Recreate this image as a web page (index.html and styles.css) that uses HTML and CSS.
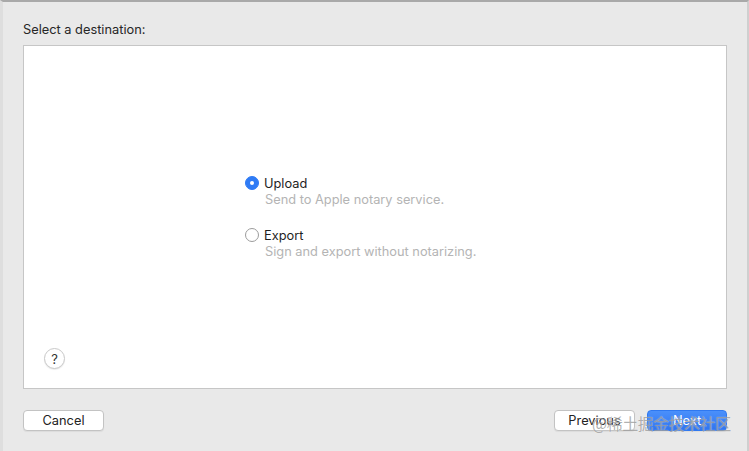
FILE: index.html
```html
<!DOCTYPE html>
<html lang="en">
<head>
  <meta charset="UTF-8" />
  <title>Select a destination</title>
  <link rel="stylesheet" href="styles.css">
</head>
<body>
  <div class="window">
    <p class="label">Select a destination:</p>

    <div class="panel">
      <div class="options">
        <label class="option">
          <span class="radio checked"></span>
          <span class="option-text">
            <span class="option-title">Upload</span>
            <span class="option-desc">Send to Apple notary service.</span>
          </span>
        </label>
        <label class="option">
          <span class="radio"></span>
          <span class="option-text">
            <span class="option-title">Export</span>
            <span class="option-desc">Sign and export without notarizing.</span>
          </span>
        </label>
      </div>
      <button class="help-btn">?</button>
    </div>

    <div class="actions">
      <button class="btn">Cancel</button>
      <div class="actions-right">
        <button class="btn">Previous</button>
        <button class="btn btn-primary">Next</button>
      </div>
    </div>
  </div>

  <div class="watermark">@稀土掘金技术社区</div>
</body>
</html>
```

FILE: styles.css
```css
body {
  margin: 0;
  background: #ececec;
  font-family: Inter, 'Liberation Sans', Arial, sans-serif;
  color: #262626;
  overflow: hidden;
}

.window {
  position: relative;
  height: 451px;
  box-sizing: border-box;
  border-top: 2px solid #a9a9a9;
  border-left: 3px solid #dedede;
  border-right: 2px solid #cfcfcf;
  padding: 0 20px 0 20px;
  background: #e9e9e9;
}

.label {
  margin: 0;
  padding-top: 20px;
  height: 23px;
  font-size: 12.8px;
  line-height: 15px;
}

.panel {
  position: relative;
  height: 342px;
  background: white;
  border: 1px solid #c6c6c6;
  display: flex;
  align-items: center;
}

.options {
  display: flex;
  flex-direction: column;
  gap: 21px;
  padding-left: 221px;
}

.option {
  display: flex;
  align-items: flex-start;
  gap: 5px;
}

.radio {
  width: 14px;
  height: 14px;
  box-sizing: border-box;
  border: 1px solid #9c9c9c;
  border-radius: 50%;
  background: white;
  flex-shrink: 0;
  position: relative;
}

.radio.checked {
  background: #2f7bf5;
  border-color: #2f7bf5;
}

.radio.checked::after {
  content: '';
  position: absolute;
  top: 4px;
  left: 4px;
  width: 4px;
  height: 4px;
  border-radius: 50%;
  background: white;
}

.option-text {
  display: flex;
  flex-direction: column;
}

.option-title {
  font-size: 12.8px;
  line-height: 15px;
  color: #1e1e1e;
}

.option-desc {
  margin-top: 1px;
  font-size: 12.8px;
  line-height: 15px;
  color: #b4b4b4;
  padding-left: 1px;
}

.help-btn {
  position: absolute;
  left: 20px;
  bottom: 19px;
  width: 21px;
  height: 21px;
  padding: 0;
  border: 1px solid #c9c9c9;
  border-radius: 50%;
  background: white;
  box-shadow: 0 1px 1px rgba(0,0,0,0.08);
  font-family: Inter, 'Liberation Sans', Arial, sans-serif;
  font-size: 13px;
  color: #333;
}

.actions {
  display: flex;
  justify-content: space-between;
  margin-top: 21px;
}

.actions-right {
  display: flex;
  gap: 12px;
}

.btn {
  width: 81px;
  height: 21px;
  padding: 0;
  border: 1px solid #c3c3c3;
  border-radius: 4px;
  background: white;
  box-shadow: 0 1px 1px rgba(0,0,0,0.06);
  font-family: Inter, 'Liberation Sans', Arial, sans-serif;
  font-size: 12.8px;
  color: #222;
}

.btn-primary {
  width: 80px;
  border-color: #2f78f0;
  background: linear-gradient(#4a90fb, #2f74ef);
  color: white;
}

.watermark {
  position: absolute;
  left: 592px;
  top: 413px;
  font-family: 'Noto Sans CJK SC', sans-serif;
  font-size: 16px;
  line-height: 20px;
  color: rgba(110, 110, 110, 0.55);
  text-shadow: 0 0 1px rgba(255,255,255,0.7);
  letter-spacing: -0.5px;
}
```
